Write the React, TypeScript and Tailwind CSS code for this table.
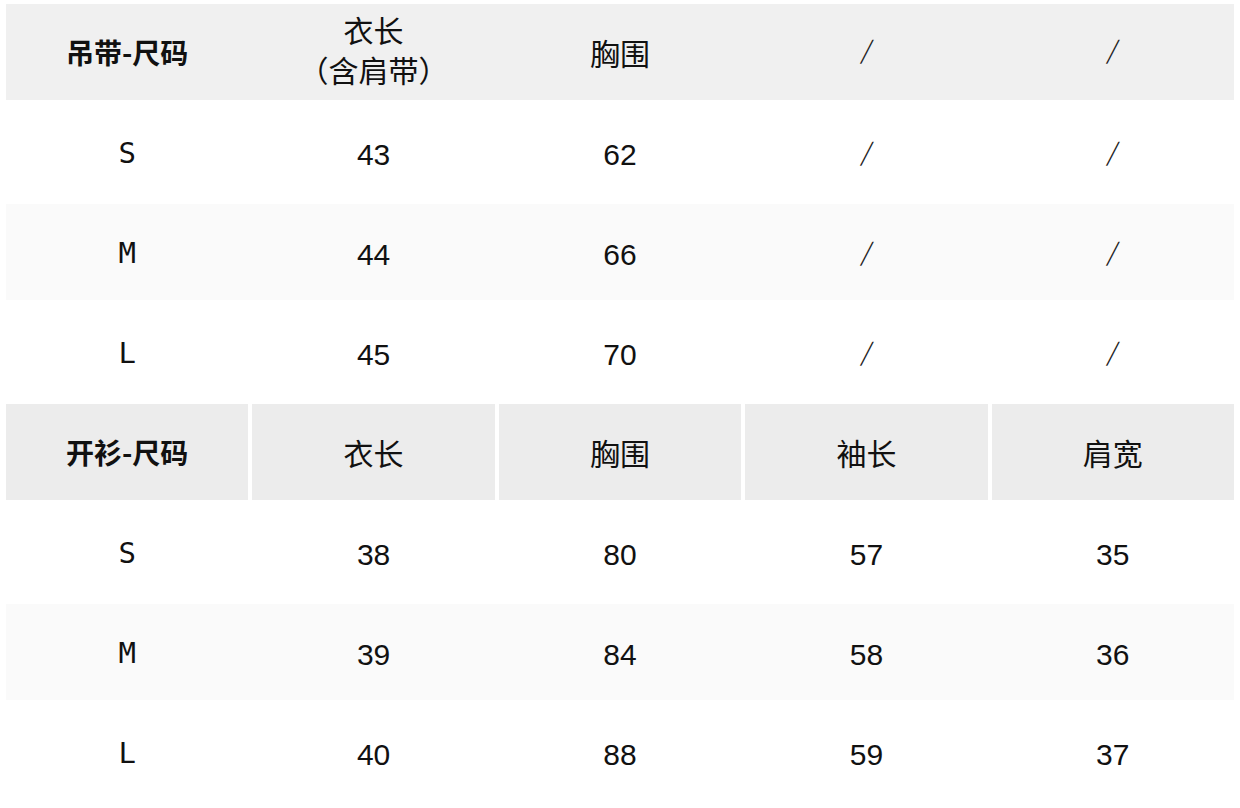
const cjk = "font-['Noto_Sans_CJK_SC',sans-serif]"

type Cell = string | string[]

const strap: { head: Cell[]; rows: string[][] } = {
  head: ["吊带-尺码", ["衣长", "（含肩带）"], "胸围", "/", "/"],
  rows: [
    ["S", "43", "62", "/", "/"],
    ["M", "44", "66", "/", "/"],
    ["L", "45", "70", "/", "/"],
  ],
}

const cardigan: { head: Cell[]; rows: string[][] } = {
  head: ["开衫-尺码", "衣长", "胸围", "袖长", "肩宽"],
  rows: [
    ["S", "38", "80", "57", "35"],
    ["M", "39", "84", "58", "36"],
    ["L", "40", "88", "59", "37"],
  ],
}

function Value({ v }: { v: string }) {
  if (v === "/") {
    return (
      <span className="inline-block -skew-x-12 font-['DejaVu_Sans',sans-serif] text-[29px] font-extralight text-[#222]">
        /
      </span>
    )
  }
  if (/^[SML]$/.test(v)) {
    return <span className="font-['DejaVu_Sans_Mono',monospace] text-[29px]">{v}</span>
  }
  return <span className="font-['Liberation_Sans',sans-serif] text-[30px]">{v}</span>
}

function HeadText({ c, first }: { c: Cell; first: boolean }) {
  if (first) return <span className={`${cjk} text-[28px] font-bold`}>{c as string}</span>
  if (Array.isArray(c)) {
    return (
      <div className={`${cjk} flex flex-col items-center pb-[6px] text-[30px] leading-[40px]`}>
        {c.map((l) => (
          <span key={l}>{l}</span>
        ))}
      </div>
    )
  }
  if (c === "/") return <Value v="/" />
  return <span className={`${cjk} text-[30px]`}>{c}</span>
}

function Table({ data, split }: { data: { head: Cell[]; rows: string[][] }; split: boolean }) {
  return (
    <>
      <div className={`grid h-[96px] grid-cols-5 gap-x-1 ${split ? "" : "bg-[#f0f0f0]"}`}>
        {data.head.map((c, i) => (
          <div key={i} className={`flex items-center justify-center ${split ? "bg-[#ececec]" : ""}`}>
            <HeadText c={c} first={i === 0} />
          </div>
        ))}
      </div>
      {data.rows.map((r, ri) => (
        <div key={ri} className={`grid h-[96px] grid-cols-5 gap-x-1 ${ri === 1 ? "bg-[#fafafa]" : ""}`}>
          {r.map((v, i) => (
            <div key={i} className="flex items-center justify-center pt-1">
              <Value v={v} />
            </div>
          ))}
        </div>
      ))}
    </>
  )
}

export default function App() {
  return (
    <div className="flex h-[808px] w-[1240px] flex-col gap-1 overflow-hidden bg-white px-[6px] pt-1 text-[#111]">
      <Table data={strap} split={false} />
      <Table data={cardigan} split={true} />
    </div>
  )
}
